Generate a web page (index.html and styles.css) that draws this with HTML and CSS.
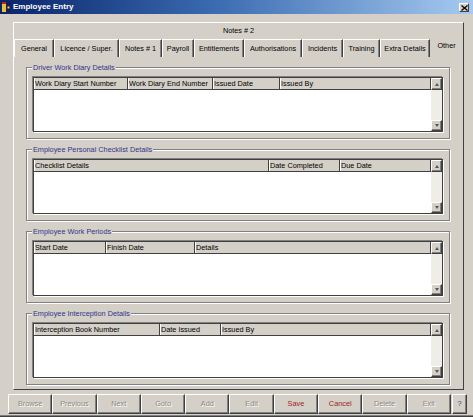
FILE: index.html
```html
<!DOCTYPE html>
<html>
<head>
<meta charset="utf-8">
<link rel="stylesheet" href="styles.css">
</head>
<body>
<div class="window">
  <div class="titlebar">
    <svg class="app-icon" width="10" height="12" viewBox="0 0 10 12">
      <rect x="0" y="1" width="4" height="10" fill="#e8c23a"/>
      <rect x="0" y="1" width="4" height="2" fill="#c02020"/>
      <circle cx="6.5" cy="2.5" r="1.8" fill="#1a1a4a"/>
      <path d="M4 5 L9 5 L9 8 L8 8 L8 11 L5 11 L5 8 L4 8 Z" fill="#1a1a4a"/>
      <rect x="5.5" y="5.5" width="2" height="2" fill="#f0d060"/>
    </svg>
    <span class="title">Employee Entry</span>
    <span class="close-btn">
      <svg width="7" height="6" viewBox="0 0 7 6"><path d="M0.5 0.5 L6.5 5.5 M6.5 0.5 L0.5 5.5" stroke="#000" stroke-width="1.2"/></svg>
    </span>
  </div>

  <div class="content">
    <div class="frame">
      <div class="frame-title">Notes # 2</div>
      <div class="tabs">
        <div class="tab t-general">General</div>
        <div class="tab t-licence">Licence / Super.</div>
        <div class="tab t-notes">Notes # 1</div>
        <div class="tab t-payroll">Payroll</div>
        <div class="tab t-entitle">Entitlements</div>
        <div class="tab t-auth">Authorisations</div>
        <div class="tab t-incid">Incidents</div>
        <div class="tab t-train">Training</div>
        <div class="tab t-extra">Extra Details</div>
        <div class="tab t-other active">Other</div>
      </div>

      <div class="page">
        <div class="group">
          <div class="group-label">Driver Work Diary Details</div>
          <div class="grid">
            <div class="grid-main">
              <div class="grid-head head-diary">
                <div class="hcell">Work Diary Start Number</div>
                <div class="hcell">Work Diary End Number</div>
                <div class="hcell">Issued Date</div>
                <div class="hcell">Issued By</div>
              </div>
              <div class="grid-body"></div>
            </div>
            <div class="scrollbar">
              <div class="sbtn up"><span class="arrow-up"></span></div>
              <div class="track"></div>
              <div class="sbtn down"><span class="arrow-down"></span></div>
            </div>
          </div>
        </div>

        <div class="group">
          <div class="group-label">Employee Personal Checklist Details</div>
          <div class="grid">
            <div class="grid-main">
              <div class="grid-head head-check">
                <div class="hcell">Checklist Details</div>
                <div class="hcell">Date Completed</div>
                <div class="hcell">Due Date</div>
              </div>
              <div class="grid-body"></div>
            </div>
            <div class="scrollbar">
              <div class="sbtn up"><span class="arrow-up"></span></div>
              <div class="track"></div>
              <div class="sbtn down"><span class="arrow-down"></span></div>
            </div>
          </div>
        </div>

        <div class="group">
          <div class="group-label">Employee Work Periods</div>
          <div class="grid">
            <div class="grid-main">
              <div class="grid-head head-periods">
                <div class="hcell">Start Date</div>
                <div class="hcell">Finish Date</div>
                <div class="hcell">Details</div>
              </div>
              <div class="grid-body"></div>
            </div>
            <div class="scrollbar">
              <div class="sbtn up"><span class="arrow-up"></span></div>
              <div class="track"></div>
              <div class="sbtn down"><span class="arrow-down"></span></div>
            </div>
          </div>
        </div>

        <div class="group">
          <div class="group-label">Employee Interception Details</div>
          <div class="grid">
            <div class="grid-main">
              <div class="grid-head head-intercept">
                <div class="hcell">Interception Book Number</div>
                <div class="hcell">Date Issued</div>
                <div class="hcell">Issued By</div>
              </div>
              <div class="grid-body"></div>
            </div>
            <div class="scrollbar">
              <div class="sbtn up"><span class="arrow-up"></span></div>
              <div class="track"></div>
              <div class="sbtn down"><span class="arrow-down"></span></div>
            </div>
          </div>
        </div>
      </div>
    </div>
  </div>

  <div class="buttons">
    <div class="btn-group">
      <div class="btn disabled">Browse</div>
      <div class="btn disabled">Previous</div>
      <div class="btn disabled">Next</div>
      <div class="btn disabled">Goto</div>
      <div class="btn disabled">Add</div>
      <div class="btn disabled">Edit</div>
      <div class="btn action">Save</div>
      <div class="btn action">Cancel</div>
      <div class="btn disabled">Delete</div>
      <div class="btn disabled">Exit</div>
    </div>
    <div class="btn help">?</div>
  </div>
</div>
</body>
</html>
```

FILE: styles.css
```css
* { box-sizing: border-box; }

html, body {
  margin: 0;
  padding: 0;
}

body {
  width: 473px;
  height: 417px;
  overflow: hidden;
  background: #d4d0c8;
  font-family: "Liberation Sans", Arial, sans-serif;
  font-size: 7.3px;
  color: #000;
}

.window {
  width: 473px;
  height: 417px;
  display: flex;
  flex-direction: column;
  border-bottom: 1px solid #404040;
  box-shadow: inset 0 -1px 0 #808080;
}

/* Title bar */
.titlebar {
  height: 14px;
  flex: none;
  display: flex;
  align-items: center;
  padding-left: 2px;
  background: linear-gradient(to right, #0a246a 0%, #3a6ab0 45%, #a6caf0 100%);
}

.app-icon {
  flex: none;
  display: block;
}

.title {
  margin-left: 1px;
  color: #fff;
  font-weight: bold;
  font-size: 8px;
  line-height: 14px;
  flex: 1;
}

.close-btn {
  width: 10px;
  height: 9px;
  margin-right: 4px;
  margin-top: 1px;
  background: #d4d0c8;
  border: 1px solid;
  border-color: #fff #404040 #404040 #fff;
  display: flex;
  align-items: center;
  justify-content: center;
}

.close-btn svg { display: block; }

/* Main content */
.content {
  flex: none;
  padding: 8px 9px 0 13px;
}

.frame {
  height: 368px;
  border: 1px solid;
  border-color: #fff #404040 #404040 #fff;
  display: flex;
  flex-direction: column;
}

.frame-title {
  height: 16px;
  line-height: 16px;
  text-align: center;
}

.tabs {
  height: 18px;
  display: flex;
}

.tab {
  height: 18px;
  border-left: 1px solid #fff;
  border-right: 1px solid #404040;
  border-top: 1px solid #fff;
  box-shadow: inset -1px 0 0 #808080;
  text-align: center;
  line-height: 17px;
  white-space: nowrap;
}

.tab.active {
  border: none;
  box-shadow: none;
  line-height: 14px;
}

.t-general { width: 40px; }
.t-licence { width: 65px; }
.t-notes { width: 43px; }
.t-payroll { width: 32px; }
.t-entitle { width: 50px; }
.t-auth { width: 58px; }
.t-incid { width: 41px; }
.t-train { width: 37px; }
.t-extra { width: 50px; }
.t-other { width: 33px; }

.page {
  flex: 1;
  padding: 10px 13px 0 12px;
  display: flex;
  flex-direction: column;
  gap: 10px;
}

/* Group boxes */
.group {
  height: 72px;
  border: 1px solid #808080;
  box-shadow: inset 1px 1px 0 #fff, 1px 1px 0 #fff;
  padding: 0 6px 6px 6px;
  display: flex;
  flex-direction: column;
}

.group-label {
  align-self: flex-start;
  margin: -5px 0 0 -1px;
  padding: 0 1px;
  background: #d4d0c8;
  color: #33338c;
  line-height: 9px;
  height: 9px;
  white-space: nowrap;
}

.grid {
  margin-top: 5px;
  flex: 1;
  display: flex;
  border: 1px solid #404040;
  box-shadow: -1px -1px 0 #808080, 1px 1px 0 #fff;
  background: #fff;
}

.grid-main {
  flex: 1;
  display: flex;
  flex-direction: column;
}

.grid-head {
  height: 12px;
  display: grid;
  border-bottom: 1px solid #404040;
  background: #d4d0c8;
}

.head-diary { grid-template-columns: 94px 85px 67px 1fr; }
.head-check { grid-template-columns: 235px 71px 1fr; }
.head-periods { grid-template-columns: 72px 89px 1fr; }
.head-intercept { grid-template-columns: 126px 61px 1fr; }

.hcell {
  border-left: 1px solid #fff;
  border-right: 1px solid #404040;
  line-height: 11px;
  padding-left: 0;
  white-space: nowrap;
  overflow: hidden;
}

.grid-body {
  flex: 1;
  background: #fff;
}

/* Scrollbar */
.scrollbar {
  width: 11px;
  display: flex;
  flex-direction: column;
  background: #eeede8;
}

.sbtn {
  height: 11px;
  background: #d4d0c8;
  border: 1px solid;
  border-color: #fff #404040 #404040 #fff;
  box-shadow: inset -1px -1px 0 #808080;
  display: flex;
  align-items: center;
  justify-content: center;
}

.sbtn.up { height: 12px; }

.track { flex: 1; }

.arrow-up {
  width: 0;
  height: 0;
  border-left: 2.5px solid transparent;
  border-right: 2.5px solid transparent;
  border-bottom: 3px solid #555;
}

.arrow-down {
  width: 0;
  height: 0;
  border-left: 2.5px solid transparent;
  border-right: 2.5px solid transparent;
  border-top: 3px solid #555;
}

/* Bottom buttons */
.buttons {
  flex: none;
  display: flex;
  padding: 4px 6px 0 8px;
}

.btn-group {
  flex: 1;
  display: flex;
}

.btn {
  flex: 1;
  height: 20px;
  line-height: 18px;
  text-align: center;
  border: 1px solid;
  border-color: #fff #404040 #404040 #fff;
  box-shadow: inset -1px -1px 0 #808080;
  white-space: nowrap;
}

.btn.disabled {
  color: #8a8884;
  text-shadow: 1px 1px 0 #fff;
}

.btn.action {
  color: #a01c1c;
}

.btn.help {
  flex: none;
  width: 15px;
  margin-left: 1px;
  color: #3a3a6a;
}
```
